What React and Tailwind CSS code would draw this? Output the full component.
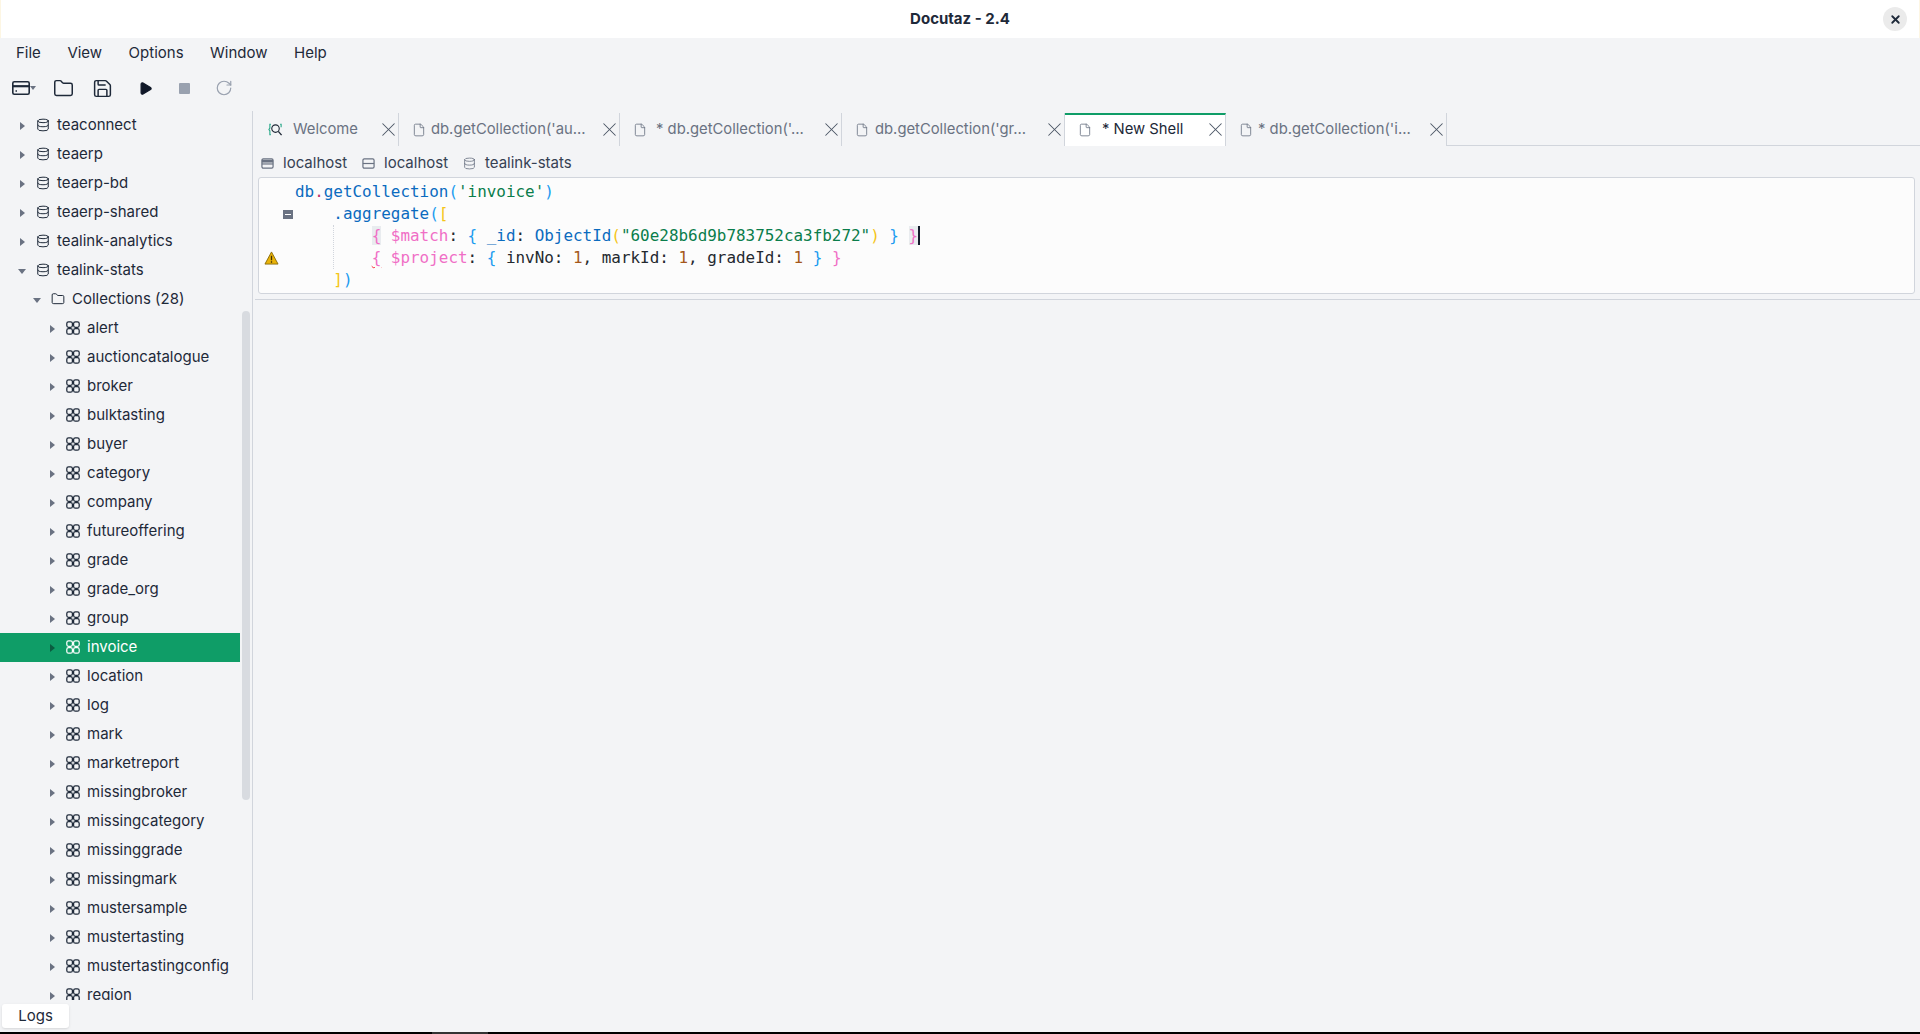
import { useState } from "react";
import { Folder, Save, Play, RotateCw, File, X, Database } from "lucide-react";

const ToolbarServerIcon = ({ className }) => (
  <svg viewBox="0 0 18 14" className={className} fill="none" stroke="currentColor" strokeWidth="1.6">
    <rect x="0.8" y="0.8" width="16.4" height="12.4" rx="1.5" />
    <path d="M1 5.2h16" strokeWidth="2.2" />
    <path d="M3.5 10h1.5" />
  </svg>
);

const ServerIcon = ({ className }) => (
  <svg viewBox="0 0 14 12" className={className} fill="none" stroke="currentColor" strokeWidth="1.3">
    <rect x="1" y="1" width="12" height="10" rx="1.5" />
    <path d="M1 6h12" />
  </svg>
);

const ServerFilledIcon = ({ className }) => (
  <svg viewBox="0 0 14 12" className={className} fill="none" stroke="currentColor" strokeWidth="1.3">
    <rect x="1" y="1" width="12" height="10" rx="1.5" />
    <path d="M1 3.5h12" strokeWidth="3" />
    <path d="M1 6.5h12" />
  </svg>
);

const CollectionIcon = ({ className }) => (
  <svg viewBox="0 0 14 14" className={className} fill="none" stroke="currentColor" strokeWidth="1.25">
    <rect x="0.8" y="0.8" width="5.6" height="5.6" rx="1.8" />
    <rect x="7.6" y="0.8" width="5.6" height="5.6" rx="1.8" />
    <rect x="0.8" y="7.6" width="5.6" height="5.6" rx="1.8" />
    <rect x="7.6" y="7.6" width="5.6" height="5.6" rx="1.8" />
  </svg>
);

const Arrow = ({ open, className = "text-gray-500" }) => (
  <svg viewBox="0 0 8 8" className={`w-2 h-2 shrink-0 ${className}`} fill="currentColor">
    {open ? <path d="M0 2h8L4 7z" /> : <path d="M2 0l5 4-5 4z" />}
  </svg>
);

const WarningIcon = () => (
  <svg viewBox="0 0 16 15" className="absolute left-[5px] top-[4px] w-[15px] h-[14px]">
    <path d="M8 1l7 13H1z" fill="#eab308" stroke="#8a6d0b" strokeWidth="1" strokeLinejoin="round" />
    <path d="M8 5v5M8 11v1.5" stroke="#3f3004" strokeWidth="1.4" />
  </svg>
);

const WelcomeIcon = () => (
  <svg viewBox="0 0 16 16" className="w-[15px] h-[15px] shrink-0" fill="none" strokeWidth="1.2">
    <path d="M3 2.5H2v4L1 8l1 1.5v4h1M13 2.5h1v3" stroke="#2aa88a" />
    <circle cx="8" cy="7" r="4" stroke="#1f2937" />
    <path d="M11 10l3.5 4" stroke="#1f2937" strokeWidth="1.5" />
  </svg>
);

const databases = ["teaconnect", "teaerp", "teaerp-bd", "teaerp-shared", "tealink-analytics", "tealink-stats"];

const collections = [
  "alert", "auctioncatalogue", "broker", "bulktasting", "buyer", "category", "company",
  "futureoffering", "grade", "grade_org", "group", "invoice", "location", "log", "mark",
  "marketreport", "missingbroker", "missingcategory", "missinggrade", "missingmark",
  "mustersample", "mustertasting", "mustertastingconfig", "region",
];

const tabs = [
  { label: "Welcome", width: "w-[144px]", icon: true, pad: "pl-[6px]" },
  { label: "db.getCollection('au...", width: "w-[221px]", pad: "" },
  { label: "* db.getCollection('...", width: "w-[222px]", pad: "pl-[4px]" },
  { label: "db.getCollection('gr...", width: "w-[223px]", pad: "pl-[1px]" },
  { label: "* New Shell", width: "w-[161px]", active: true, pad: "pl-[5px]" },
  { label: "* db.getCollection('i...", width: "w-[221px]", pad: "" },
];

const Tab = ({ label, width, active, icon, pad }) => (
  <div
    className={`relative flex items-center h-[33px] pl-[13px] border-r border-gray-300 shrink-0 text-[14.8px] ${width} ${
      active ? "bg-white border-t-2 border-t-[#0f9d67] text-gray-800 pb-[2px]" : "text-gray-500"
    }`}
  >
    <span className="w-[19px] flex shrink-0">
      {icon ? <WelcomeIcon /> : <File size={14} strokeWidth={1.4} className="text-gray-500" />}
    </span>
    <span className={`whitespace-nowrap ${pad}`}>{label}</span>
    <X
      size={23}
      strokeWidth={1.1}
      className={`absolute right-[-2px] text-gray-600 ${active ? "top-[3px]" : "top-[5px]"}`}
    />
  </div>
);

const Row = ({ level, open, icon: Icon, label, selected }) => (
  <div
    className={`flex items-center w-[240px] h-[29px] shrink-0 ${selected ? "bg-[#0f9d67] text-white" : "text-gray-800"}`}
    style={{ paddingLeft: 18 + level * 15 }}
  >
    <Arrow open={open} className={selected ? "text-[#0b5c40]" : "text-gray-500"} />
    <span className="ml-[10px] w-[21px] shrink-0 flex">
      <Icon className="w-[14px] h-[14px] -mt-[1px]" size={14} strokeWidth={1.7} />
    </span>
    <span className="whitespace-nowrap">{label}</span>
  </div>
);

const Crumb = ({ icon: Icon, label, className }) => (
  <div className={`flex items-center ${className}`}>
    <Icon className="w-[13px] h-[13px] text-gray-500 mr-[9px]" size={13} strokeWidth={1.5} />
    <span className="text-gray-700">{label}</span>
  </div>
);

const blue = "text-[#0b6bbf]";
const sky = "text-[#1a9bf0]";
const pink = "text-[#f06fc6]";
const yellow = "text-[#f5c518]";
const green = "text-[#0a7d4b]";
const brown = "text-[#a4581a]";
const dark = "text-[#24292f]";

const Line = ({ gutter, children }) => (
  <div className="relative h-[22px] leading-[22px] pl-[36px] whitespace-pre">
    {gutter}
    {children}
  </div>
);

export default function App() {
  const [menu] = useState(["File", "View", "Options", "Window", "Help"]);

  return (
    <div className="flex flex-col h-screen overflow-hidden bg-[#f3f4f6] text-[15px] font-['Inter',sans-serif]">
      <div className="relative flex items-center justify-center h-[38px] shrink-0 bg-white border-x border-[#fdf6e3]">
        <span className="font-bold text-[15px] text-gray-800">Docutaz - 2.4</span>
        <button className="absolute right-[12px] top-[7px] w-[24px] h-[24px] rounded-full bg-[#ebebeb] flex items-center justify-center">
          <X size={13} strokeWidth={3.4} className="text-gray-800" />
        </button>
      </div>

      <div className="flex items-center gap-[26.5px] h-[31px] pl-4 shrink-0 text-gray-800">
        {menu.map((m) => (
          <span key={m}>{m}</span>
        ))}
      </div>

      <div className="flex items-center h-[38px] shrink-0 pl-[12px]">
        <div className="flex items-center w-[41px] text-gray-800">
          <ToolbarServerIcon className="w-[18px] h-[14px]" />
          <svg viewBox="0 0 6 4" className="w-[6px] h-[4px] text-gray-500" fill="currentColor">
            <path d="M0 0h6L3 4z" />
          </svg>
        </div>
        <Folder size={21} strokeWidth={1.7} className="text-gray-800" />
        <Save size={21} strokeWidth={1.7} className="text-gray-800 ml-[18px]" />
        <Play size={15} fill="currentColor" className="text-gray-900 ml-[25px]" />
        <span className="w-[11px] h-[11px] rounded-[1px] bg-gray-400 ml-[26px]" />
        <RotateCw size={18} strokeWidth={1.6} className="text-gray-400 ml-[25px]" />
      </div>

      <div className="flex h-[893px] shrink-0 pt-[4px]">
        <div className="relative flex flex-col w-[253px] shrink-0 overflow-hidden border-r border-gray-300">
          {databases.map((d, i) => (
            <Row key={d} level={0} open={i === 5} icon={Database} label={d} />
          ))}
          <Row level={1} open icon={Folder} label="Collections (28)" />
          {collections.map((c) => (
            <Row key={c} level={2} icon={CollectionIcon} label={c} selected={c === "invoice"} />
          ))}
          <div className="absolute left-[242px] top-[200px] w-[8px] h-[489px] rounded-full bg-[#d8dbe0]" />
        </div>

        <div className="flex flex-col flex-1 min-w-0 pl-[2px]">
          <div className="flex h-[35px] items-start pt-[2px] shrink-0">
            {tabs.map((t) => (
              <Tab key={t.label} {...t} />
            ))}
            <div className="flex-1 h-[33px] border-b border-gray-300" />
          </div>

          <div className="flex items-center h-[31px] shrink-0 pl-[6px] pt-[3px]">
            <Crumb icon={ServerFilledIcon} label="localhost" className="w-[101px]" />
            <Crumb icon={ServerIcon} label="localhost" className="w-[101px]" />
            <Crumb icon={Database} label="tealink-stats" />
          </div>

          <div className="relative h-[117px] mr-[5px] ml-[3px] shrink-0 rounded-[3px] border border-gray-300 bg-[#fcfcfc] font-['DejaVu_Sans_Mono',monospace] text-[15.93px] pt-[3px]">
            <Line>
              <span className={blue}>db</span>
              <span className="text-[#c2366b]">.</span>
              <span className={blue}>getCollection</span>
              <span className={sky}>(</span>
              <span className={green}>'invoice'</span>
              <span className={sky}>)</span>
            </Line>
            <Line
              gutter={
                <span className="absolute left-[24px] top-[7px] w-[10px] h-[9px] bg-gray-500 flex items-center justify-center">
                  <span className="w-[6px] h-[1px] bg-white" />
                </span>
              }
            >
              {"    "}
              <span className={blue}>.aggregate</span>
              <span className={sky}>(</span>
              <span className={yellow}>[</span>
            </Line>
            <Line>
              {"        "}
              <span className={`${pink} bg-[#e9ecef]`}>{"{"}</span>
              <span className={pink}> $match</span>
              <span className={dark}>: </span>
              <span className={sky}>{"{ "}</span>
              <span className={blue}>_id</span>
              <span className={dark}>: </span>
              <span className={blue}>ObjectId</span>
              <span className={yellow}>(</span>
              <span className={green}>"60e28b6d9b783752ca3fb272"</span>
              <span className={yellow}>)</span>
              <span className={sky}>{" } "}</span>
              <span className={`${pink} bg-[#e9ecef] border-r-2 border-gray-900`}>{"}"}</span>
            </Line>
            <Line gutter={<WarningIcon />}>
              {"        "}
              <span className={`${pink} underline decoration-wavy decoration-red-500 decoration-1 underline-offset-1`}>{"{"}</span>
              <span className={pink}> $project</span>
              <span className={dark}>: </span>
              <span className={sky}>{"{ "}</span>
              <span className={dark}>invNo: </span>
              <span className={brown}>1</span>
              <span className={dark}>, markId: </span>
              <span className={brown}>1</span>
              <span className={dark}>, gradeId: </span>
              <span className={brown}>1</span>
              <span className={sky}>{" } "}</span>
              <span className={pink}>{"}"}</span>
            </Line>
            <Line>
              {"    "}
              <span className={yellow}>]</span>
              <span className={sky}>)</span>
            </Line>
            <div className="absolute left-[74px] top-[47px] h-[44px] border-l border-dotted border-gray-300" />
          </div>

          <div className="mt-[5px] border-t border-gray-300" />
        </div>
      </div>

      <div className="flex-1 relative">
        <div className="absolute left-[2px] top-[4px] w-[67px] h-[24px] bg-white rounded-[3px] shadow-sm flex items-center justify-center text-gray-800">
          Logs
        </div>
      </div>

      <div className="relative h-[2px] shrink-0 bg-black">
        <div className="absolute left-[432px] top-0 w-[56px] h-[2px] bg-[#333]" />
      </div>
    </div>
  );
}
